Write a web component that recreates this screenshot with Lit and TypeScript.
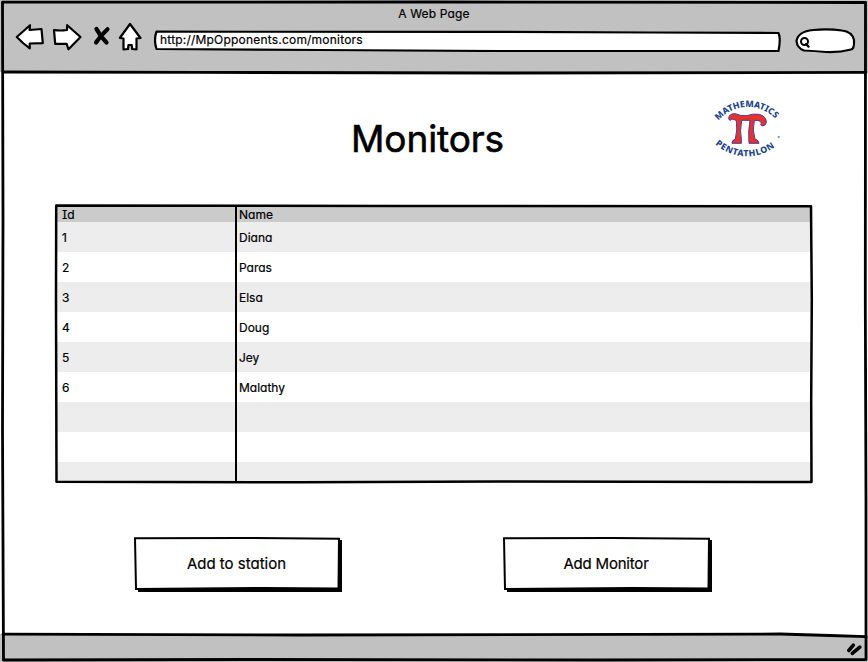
import { LitElement, html, svg, css } from "lit";
import { customElement, property } from "lit/decorators.js";
import { styleMap } from "lit/directives/style-map.js";

interface Monitor {
  id: number;
  name: string;
}

const MONITORS: Monitor[] = [
  { id: 1, name: "Diana" },
  { id: 2, name: "Paras" },
  { id: 3, name: "Elsa" },
  { id: 4, name: "Doug" },
  { id: 5, name: "Jey" },
  { id: 6, name: "Malathy" },
];

@customElement("pentathlon-logo")
export class PentathlonLogo extends LitElement {
  static styles = css`
    :host { display: block; width: 90px; height: 76px; }
    svg { display: block; }
    .arc { font: 800 8.8px "Noto Sans", sans-serif; fill: #1c4590; letter-spacing: -.05px; }
    .low { letter-spacing: .65px; }
    .mark { font: 700 4px "Noto Sans", sans-serif; fill: #1c4590; }
  `;
  render() {
    return html`<svg width="90" height="76" viewBox="0 0 90 76">
      <defs>
        <path id="top" d="M18.6 30.5 A38 38 0 0 1 80 35" />
        <path id="bottom" d="M15.2 54.2 A47 47 0 0 0 84 48" />
      </defs>
      <text class="arc"><textPath href="#top">MATHEMATICS</textPath></text>
      <text class="arc low"><textPath href="#bottom">PENTATHLON</textPath></text>
      <text class="mark" x="77.5" y="48">v</text>
      <path transform="scale(.3333)" fill="#e5322d" stroke="#4a3a9c" stroke-width="3" stroke-linejoin="round"
        d="M86 84 Q88 70 106 71 Q120 78 140 77 Q160 70 178 73 Q200 80 199 98 Q196 108 186 108 Q180 106 184 99 Q180 89 163 92 Q156 120 165 147 Q177 151 177 160 L147 160 Q144 120 150 91 L125 91 Q119 125 124 147 L124 160 L96 160 Q96 150 106 147 Q113 120 109 92 Q96 84 92 91 Q86 92 86 84 Z" />
    </svg>`;
  }
}

@customElement("sketch-button")
export class SketchButton extends LitElement {
  @property() label = "";
  @property({ type: Number }) width = 208;
  @property({ type: Number }) tracking = 0;
  static styles = css`
    :host { display: block; height: 55px; }
    .box { position: relative; height: 55px; }
    svg { position: absolute; inset: 0; }
    button {
      position: relative; display: flex; width: 100%; height: 55px; padding: 0 3px 2px 0;
      align-items: center; justify-content: center; border: 0; background: none; color: #000;
      font: 15px Inter, "Liberation Sans", sans-serif; font-feature-settings: "cv11"; -webkit-text-stroke: .2px #000;
      letter-spacing: inherit;
    }
  `;
  render() {
    const w = this.width;
    return html`<div class="box" style=${styleMap({ width: `${w}px`, letterSpacing: `${this.tracking}px` })}>
      <svg width=${w} height="55" viewBox="0 0 ${w} 55">
        <path d=${`M4 53.5 H${w - 2} V3`} fill="none" stroke="#000" stroke-width="4" />
        <path d=${`M1 1.2 L${w - 100} 1 L${w - 3} 1.8 L${w - 3.5} 51.5 L${w - 80} 51 L2 52 Z`} fill="#fff" stroke="#000" stroke-width="2" />
      </svg><button>${this.label}</button></div>`;
  }
}

@customElement("app-root")
export class AppRoot extends LitElement {
  static styles = css`
    :host {
      display: block; position: relative; width: 868px; height: 662px; overflow: hidden; background: #fff; color: #000;
      font: 12px/16px Inter, "Liberation Sans", sans-serif; font-feature-settings: "cv11", "cv08"; -webkit-text-stroke: .2px #000;
    }
    .window { display: flex; flex-direction: column; height: 662px; }
    .frame { position: absolute; inset: 0; pointer-events: none; }
    .ink { fill: none; stroke: #000; stroke-width: 2.8; stroke-linejoin: round; stroke-linecap: round; }
    .solid { fill: #fff; }
    .chrome { height: 72px; box-sizing: border-box; padding-top: 6px; background: #c1c1c1; }
    .title { text-align: center; letter-spacing: .15px; }
    .tools { display: flex; height: 40px; }
    .nav { width: 154px; flex: none; }
    .address { width: 627px; height: 22px; margin-top: 8px; position: relative; }
    .address svg { position: absolute; inset: 0; }
    .url { position: relative; display: block; padding: 2px 0 0 6px; letter-spacing: .2px; }
    .search { margin: 5px 0 0 13px; }
    .page { flex: 1; display: flex; flex-direction: column; }
    .heading { display: grid; grid-template-columns: 351px 349px 168px; height: 133px; }
    h1 { grid-column: 2; margin: 45px 0 0; text-align: left; white-space: nowrap; font-size: 37px; line-height: 44px; font-weight: 400; letter-spacing: -.1px; -webkit-text-stroke: .6px #000; }
    pentathlon-logo { margin-top: 18px; }
    .grid { position: relative; width: 757px; height: 278px; margin-left: 55px; overflow: visible; }
    .rows { height: 278px; overflow: hidden; box-sizing: border-box; padding: 1px; }
    .row { display: grid; grid-template-columns: 177px 1fr; height: 30px; line-height: 32px; padding-left: 6px; }
    .row:nth-child(even) { background: #ededed; }
    .head { height: 16px; line-height: 18px; background: #cbcbcb; }
    .lines { position: absolute; left: -2px; top: -2px; }
    .actions { display: flex; gap: 161px; margin: 54px 0 0 134px; }
    .status { height: 28px; background: #c1c1c1; flex: none; }
  `;

  private row(m?: Monitor) {
    return html`<div class="row"><span>${m?.id ?? ""}</span><span>${m?.name ?? ""}</span></div>`;
  }

  private frame() {
    return svg`
      <path d="M780 634 L868 636.6 V633 H780 Z" fill="#fff"/>
      <path class="ink" d="M2.5 2.2 L430 2 L865.5 2.5 L865.3 300 L866 500 L866 659.5 L600 660 L250 659.5 L3.5 660 L2.5 430 L3 220 Z"/>
      <path class="ink" d="M3 72 L200 72.4 L500 73 L866 72.4"/>
      <path class="ink" d="M3 634.2 L300 635 L780 634 L830 635.5 L866 636.6"/>
      <path d="M848.8 650.5 L853.3 645.2 M852.3 653.3 L859.8 647.2" stroke="#000" stroke-width="3.6" stroke-linecap="round"/>`;
  }

  render() {
    return html`
      <div class="window">
        <header class="chrome">
          <div class="title">A Web Page</div>
          <div class="tools">
            <svg class="nav" width="154" height="40" viewBox="0 22 154 40">
              <path class="ink solid" style="stroke-width:2.2" d="M16.8 37 L30 25.2 L29.6 30 L41.5 29 L42.8 43.2 L29.7 43.5 L29.8 48.3 L23 43 Z"/>
              <path class="ink solid" style="stroke-width:2.2" d="M54 30 Q60 31 67 30 L67.2 25.2 L80.5 37 L68.5 49.3 L66.6 43.8 L55.2 43.8 Z"/>
              <path class="ink" style="stroke-width:4.2" d="M96.5 29 Q100 36 106.5 42.5 M107.5 29.2 Q101 35 96 42.5"/>
              <path class="ink solid" style="stroke-width:2.2" d="M130 24 L140.5 38 L136.5 38.5 L136.5 49.3 L132.2 49 L131.7 45 L128.5 45 L128 49 L123.5 49.5 L123.5 38.5 L119.8 38 Z"/>
            </svg>
            <div class="address">
              <svg width="627" height="22" viewBox="154 30 627 22">
                <path class="ink solid" style="stroke-width:2.2" d="M156.5 31.7 L480 31.8 L650 32.5 L778.5 33 Q781 38 778.5 51 L500 51 L320 50 L156.5 49 Q153.5 40 156.5 31.7 Z"/>
              </svg>
              <span class="url">http://MpOpponents.com/monitors</span>
            </div>
            <svg class="search" width="64" height="28" viewBox="794 27 64 28">
              <path class="ink solid" style="stroke-width:2.2" d="M796.5 41 Q798 31.5 813 30 Q828 28.5 842 30.5 Q852 31.5 854 40 Q854.5 49 851 49.5 Q840 52.5 826 52 Q815 51 804 50.5 Q797 48 796.5 41 Z"/>
              <circle class="ink" style="stroke-width:2" cx="804.5" cy="41.5" r="3.5"/>
              <path class="ink" style="stroke-width:2.2" d="M806 44 L808.6 46.6"/>
            </svg>
          </div>
        </header>
        <main class="page">
          <div class="heading"><h1>Monitors</h1><pentathlon-logo></pentathlon-logo></div>
          <section class="grid">
            <div class="rows">
              <div class="row head"><span>Id</span><span>Name</span></div>
              ${MONITORS.map((m) => this.row(m))}
              ${[0, 1, 2].map(() => this.row())}
            </div>
            <svg class="lines" width="762" height="282" viewBox="53 203 762 282">
              <path class="ink" style="stroke-width:2.5" d="M56.2 205.6 L400 206 L811 206.3 L811.8 300 L811.2 400 L811.5 482 L500 481.6 L300 482.3 L56.5 481.8 L56 300 Z"/>
              <path class="ink" style="stroke-width:2" d="M236 206 L236 481"/>
            </svg>
          </section>
          <div class="actions">
            <sketch-button label="Add to station" .width=${208}></sketch-button>
            <sketch-button label="Add Monitor" .width=${209} .tracking=${-0.2}></sketch-button>
          </div>
        </main>
        <footer class="status"></footer>
      </div>
      <svg class="frame" width="868" height="662" viewBox="0 0 868 662">${this.frame()}</svg>
    `;
  }
}
